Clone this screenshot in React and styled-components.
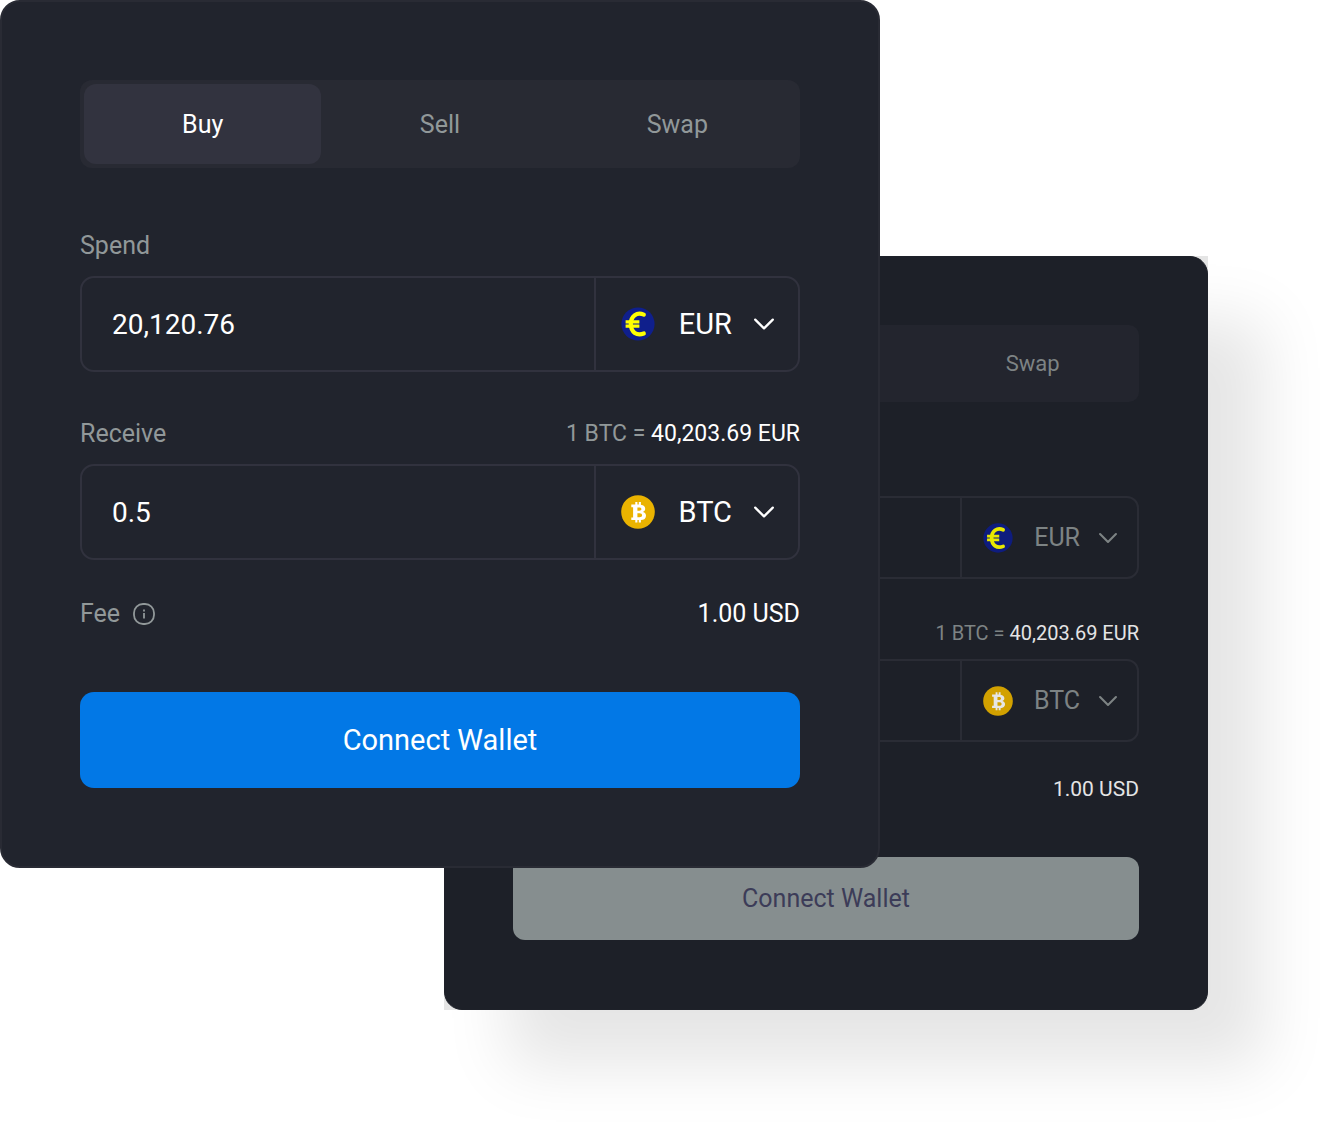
import React, { useId, useState } from 'react';
import styled, { createGlobalStyle, ThemeProvider } from 'styled-components';

const GlobalStyle = createGlobalStyle`
  *, *::before, *::after { box-sizing: border-box; }
  body { margin: 0; background: #ffffff; }
  button, input, select { font: inherit; color: inherit; margin: 0; }
`;

const large = {
  pad: 78, padEnd: 78, frame: 2, line: 2, radius: 20, corner: 14, tabCorner: 12,
  label: 25, labelLine: 28, value: 28, pair: 29, rate: 23, fee: 25,
  tabPad: 4, tabHeight: 80, fieldHeight: 96,
  gapTabs: 64, gapLabel: 16, gapField: 48, gapFee: 40, gapButton: 64,
  inset: 30, coin: 34, coinGap: 24, chevron: 20, chevronGap: 22, side: 25,
  info: 22, infoGap: 13,
  card: '#21242d', edge: '#292b34', tabs: '#282a33', tabOn: '#32333f',
  border: '#31323e', muted: '#919899', strong: '#ffffff', pairText: '#ffffff',
  action: '#0278e6', actionText: '#ffffff',
  euro: '#0f1f8c', euroMark: '#ffff00', btc: '#eab300', btcMark: '#ffffff',
};

const small = {
  pad: 68, padEnd: 69, frame: 1, line: 2, radius: 18, corner: 12, tabCorner: 10,
  label: 22, labelLine: 24, value: 24, pair: 25, rate: 20, fee: 21,
  tabPad: 3, tabHeight: 71, fieldHeight: 83,
  gapTabs: 56, gapLabel: 14, gapField: 42, gapFee: 35, gapButton: 56,
  inset: 26, coin: 30, coinGap: 21, chevron: 18, chevronGap: 19, side: 21,
  info: 20, infoGap: 11,
  card: '#1d2028', edge: '#1e2129', tabs: '#23252e', tabOn: '#2b2c36',
  border: '#2a2c35', muted: '#7d8384', strong: '#e4e4e5', pairText: '#7d8384',
  action: '#868e8f', actionText: '#3c3c58',
  euro: '#0e1c7e', euroMark: '#e8e800', btc: '#d2a100', btcMark: '#e6e6e6',
};

const Stage = styled.main`
  display: grid;
  grid-template-columns: 444fr 436fr 328fr;
  grid-template-rows: 256px auto;
  align-items: start;
  padding: 0 120px 120px 0;
  overflow: hidden;
  font-family: Roboto, "Liberation Sans", sans-serif;
`;

const FrontSlot = styled.div`
  grid-column: 1 / 3;
  grid-row: 1 / 3;
  z-index: 1;
`;

const BackSlot = styled.div`
  grid-column: 2 / 4;
  grid-row: 2 / 3;
  background: #e5e5e5;
  box-shadow: 60px 60px 60px -4px rgba(0, 0, 0, 0.1);
`;

const Card = styled.form`
  display: flex;
  flex-direction: column;
  padding: ${({ theme }) => theme.pad}px;
  padding-bottom: ${({ theme }) => theme.padEnd}px;
  border: ${({ theme }) => theme.frame}px solid ${({ theme }) => theme.edge};
  border-radius: ${({ theme }) => theme.radius}px;
  background: ${({ theme }) => theme.card};
  color: ${({ theme }) => theme.strong};
`;

const Tabs = styled.div`
  display: grid;
  grid-template-columns: repeat(3, 1fr);
  padding: ${({ theme }) => theme.tabPad}px;
  border-radius: ${({ theme }) => theme.tabCorner}px;
  background: ${({ theme }) => theme.tabs};
`;

const Tab = styled.button`
  height: ${({ theme }) => theme.tabHeight}px;
  padding: 0;
  border: 0;
  border-radius: ${({ theme }) => theme.tabCorner}px;
  background: ${({ theme, $on }) => ($on ? theme.tabOn : 'transparent')};
  color: ${({ theme, $on }) => ($on ? theme.strong : theme.muted)};
  font-size: ${({ theme }) => theme.label}px;
  cursor: pointer;
`;

const Row = styled.div`
  display: flex;
  align-items: center;
  justify-content: space-between;
  margin-top: ${({ theme, $gap }) => theme[$gap]}px;
  line-height: ${({ theme }) => theme.labelLine}px;
`;

const Label = styled.label`
  color: ${({ theme }) => theme.muted};
  font-size: ${({ theme }) => theme.label}px;
`;

const Rate = styled.span`
  color: ${({ theme }) => theme.muted};
  font-size: ${({ theme }) => theme.rate}px;
  white-space: nowrap;
`;

const RateValue = styled.span`
  color: ${({ theme }) => theme.strong};
`;

const Field = styled.div`
  display: flex;
  height: ${({ theme }) => theme.fieldHeight}px;
  margin-top: ${({ theme }) => theme.gapLabel}px;
  border: ${({ theme }) => theme.line}px solid ${({ theme }) => theme.border};
  border-radius: ${({ theme }) => theme.corner}px;
`;

const Amount = styled.input`
  flex: 1;
  min-width: 0;
  padding: 0 ${({ theme }) => theme.inset}px;
  border: 0;
  outline: 0;
  background: transparent;
  font-size: ${({ theme }) => theme.value}px;
`;

const Currency = styled.label`
  display: flex;
  align-items: center;
  padding: 0 ${({ theme }) => theme.side}px;
  padding-right: ${({ theme }) => theme.side - 1}px;
  border-left: ${({ theme }) => theme.line}px solid ${({ theme }) => theme.border};
  color: ${({ theme }) => theme.pairText};
`;

const Picker = styled.select`
  appearance: none;
  field-sizing: content;
  margin: 0 ${({ theme }) => theme.chevronGap}px 0 ${({ theme }) => theme.coinGap}px;
  padding: 0;
  border: 0;
  outline: 0;
  background: transparent;
  font-size: ${({ theme }) => theme.pair}px;
`;

const Glyph = styled.svg`
  display: block;
  flex: none;
  width: ${({ theme, $size }) => theme[$size]}px;
  height: ${({ theme, $size }) => theme[$size]}px;
  fill: none;
`;

const FeeName = styled.span`
  display: flex;
  align-items: center;
  gap: ${({ theme }) => theme.infoGap}px;
  color: ${({ theme }) => theme.muted};
  font-size: ${({ theme }) => theme.label}px;
`;

const InfoButton = styled.button`
  padding: 0;
  border: 0;
  background: transparent;
  cursor: pointer;
`;

const FeeValue = styled.span`
  font-size: ${({ theme }) => theme.fee}px;
`;

const Submit = styled.button`
  height: ${({ theme }) => theme.fieldHeight}px;
  margin-top: ${({ theme }) => theme.gapButton}px;
  border: 0;
  border-radius: ${({ theme }) => theme.corner}px;
  background: ${({ theme }) => theme.action};
  color: ${({ theme }) => theme.actionText};
  font-size: ${({ theme }) => theme.pair}px;
  cursor: pointer;
`;

const EuroDisc = styled.circle`
  fill: ${({ theme }) => theme.euro};
`;

const EuroStroke = styled.path`
  stroke: ${({ theme }) => theme.euroMark};
  stroke-width: ${({ $w }) => $w};
  stroke-linecap: ${({ $cap }) => $cap || 'butt'};
`;

const BtcDisc = styled.circle`
  fill: ${({ theme }) => theme.btc};
`;

const BtcMark = styled.path`
  fill: ${({ theme }) => theme.btcMark};
  fill-rule: evenodd;
`;

function EuroIcon() {
  return (
    <Glyph $size="coin" viewBox="0 0 34 34" aria-hidden="true">
      <EuroDisc cx="17" cy="17" r="16.6" />
      <EuroStroke $w="4.2" $cap="round" d="M22.8 7.6C16 4.8 9.8 8.8 9.8 17.1c0 8.4 6.2 12 13 9.4" />
      <EuroStroke $w="3.2" d="M4.6 14.8h13.8M4.6 19.2h13.8" />
    </Glyph>
  );
}

function BitcoinIcon() {
  return (
    <Glyph $size="coin" viewBox="0 0 34 34" aria-hidden="true">
      <BtcDisc cx="17" cy="17" r="16.8" />
      <BtcMark d="M10.3 9.6h4V7.1h2.1v2.5h1.4V7.1h2.1v2.7c2.7.4 4.3 1.8 4.3 4 0 1.5-.8 2.6-2.2 3.1 1.9.5 3 1.8 3 3.8 0 2.7-2 4.2-5.1 4.4v2.3h-2.1V25h-1.4v2.4h-2.1V25h-4v-2.6h1.8V12.2h-1.8V9.6zM16.4 12.4v3.4h1.8c1.4 0 2.2-.6 2.2-1.7s-.8-1.7-2.2-1.7h-1.8zM16.4 18.3v4h2.1c1.7 0 2.6-.7 2.6-2s-.9-2-2.6-2h-2.1z" />
    </Glyph>
  );
}

function Chevron() {
  return (
    <Glyph $size="chevron" viewBox="0 0 20 20" aria-hidden="true">
      <path d="M1.2 5.6 10 14.4l8.8-8.8" stroke="currentColor" strokeWidth="2.3" strokeLinecap="round" strokeLinejoin="round" />
    </Glyph>
  );
}

function InfoIcon() {
  return (
    <Glyph $size="info" viewBox="0 0 22 22" aria-hidden="true">
      <rect x="1" y="1" width="20" height="20" rx="9" stroke="currentColor" strokeWidth="1.8" />
      <path d="M11 10v5.6" stroke="currentColor" strokeWidth="1.8" />
      <path d="M11 6.6v1.8" stroke="currentColor" strokeWidth="1.8" />
    </Glyph>
  );
}

function AmountField({ id, value, currency, icon }) {
  const [amount, setAmount] = useState(value);
  return (
    <Field>
      <Amount id={id} inputMode="decimal" value={amount} onChange={(e) => setAmount(e.target.value)} />
      <Currency>
        {icon}
        <Picker aria-label="Currency" defaultValue={currency}>
          <option value={currency}>{currency}</option>
        </Picker>
        <Chevron />
      </Currency>
    </Field>
  );
}

function ExchangeCard({ size, ...rest }) {
  const id = useId();
  const [mode, setMode] = useState('Buy');
  return (
    <ThemeProvider theme={size}>
      <Card onSubmit={(e) => e.preventDefault()} {...rest}>
        <Tabs role="tablist">
          {['Buy', 'Sell', 'Swap'].map((name) => (
            <Tab key={name} type="button" role="tab" aria-selected={mode === name} $on={mode === name} onClick={() => setMode(name)}>
              {name}
            </Tab>
          ))}
        </Tabs>
        <Row $gap="gapTabs">
          <Label htmlFor={`${id}-spend`}>Spend</Label>
        </Row>
        <AmountField id={`${id}-spend`} value="20,120.76" currency="EUR" icon={<EuroIcon />} />
        <Row $gap="gapField">
          <Label htmlFor={`${id}-receive`}>Receive</Label>
          <Rate>
            1 BTC = <RateValue>40,203.69 EUR</RateValue>
          </Rate>
        </Row>
        <AmountField id={`${id}-receive`} value="0.5" currency="BTC" icon={<BitcoinIcon />} />
        <Row $gap="gapFee">
          <FeeName>
            Fee
            <InfoButton type="button" aria-label="About the fee">
              <InfoIcon />
            </InfoButton>
          </FeeName>
          <FeeValue>1.00 USD</FeeValue>
        </Row>
        <Submit type="submit">Connect Wallet</Submit>
      </Card>
    </ThemeProvider>
  );
}

export default function App() {
  return (
    <>
      <GlobalStyle />
      <Stage>
        <FrontSlot>
          <ExchangeCard size={large} />
        </FrontSlot>
        <BackSlot>
          <ExchangeCard size={small} inert />
        </BackSlot>
      </Stage>
    </>
  );
}
